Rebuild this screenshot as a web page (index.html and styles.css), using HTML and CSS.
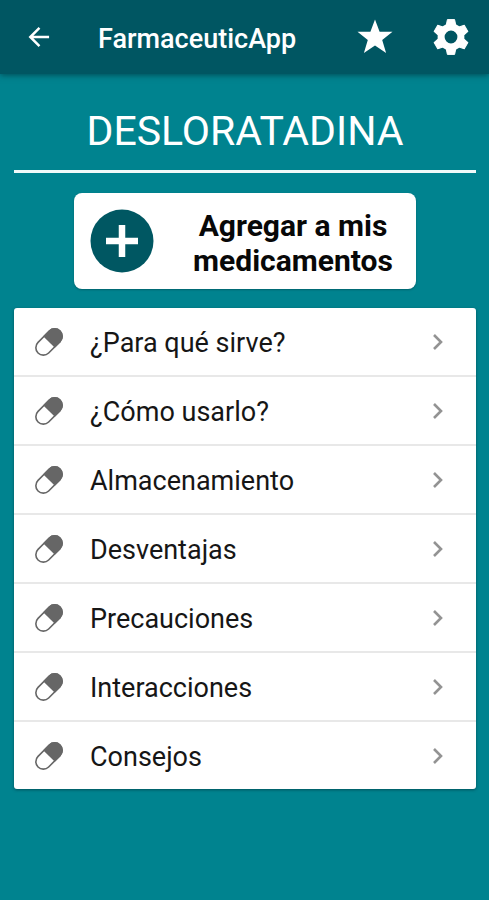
FILE: index.html
```html
<!DOCTYPE html>
<html lang="es">
<head>
<meta charset="utf-8">
<meta name="viewport" content="width=device-width, initial-scale=1">
<title>FarmaceuticApp</title>
<link rel="stylesheet" href="styles.css">
</head>
<body>
<svg class="sprite" aria-hidden="true">
  <symbol id="pill" viewBox="0 0 28 28">
    <g transform="rotate(-45 14 14)">
      <rect x="-1.5" y="6.500" width="31" height="15" rx="7.500" fill="#fff" stroke="#666" stroke-width="1.6"/>
      <path d="M14 5.700h8a8.300 8.300 0 0 1 0 16.600h-8z" fill="#666"/>
    </g>
  </symbol>
  <symbol id="chevron" viewBox="0 0 12 18">
    <path d="M2 2l7 7-7 7" fill="none" stroke="#939393" stroke-width="2.6"/>
  </symbol>
</svg>
<header class="bar">
  <button class="icon-button" type="button" aria-label="Volver">
    <svg class="icon-back" viewBox="0 0 24 24"><path d="M23 12H3M12.500 2L2.500 12l10 10" fill="none" stroke="#fff" stroke-width="2.700"/></svg>
  </button>
  <h1 class="bar-title">FarmaceuticApp</h1>
  <button class="icon-button" type="button" aria-label="Favoritos">
    <svg class="icon-star" viewBox="0 0 36 36"><path d="M18 .5l4.600 12.300h12.900l-10.300 8.300 3.900 12.900L18 26.400 6.900 34l3.900-12.900L.5 12.800h12.900z" fill="#fff"/></svg>
  </button>
  <button class="icon-button" type="button" aria-label="Ajustes">
    <svg class="icon-gear" viewBox="-18 -18 36 36">
      <circle r="9.900" fill="none" stroke="#fff" stroke-width="7"/>
      <g fill="#fff" stroke="#fff" stroke-width="1" stroke-linejoin="round">
        <path id="tooth" d="M-3.600-17.400h7.200L5-10.500H-5z"/>
        <use href="#tooth" transform="rotate(60)"/>
        <use href="#tooth" transform="rotate(120)"/>
        <use href="#tooth" transform="rotate(180)"/>
        <use href="#tooth" transform="rotate(240)"/>
        <use href="#tooth" transform="rotate(300)"/>
      </g>
    </svg>
  </button>
</header>
<main class="content">
  <h2 class="drug">DESLORATADINA</h2>
  <button class="add" type="button">
    <svg class="icon-add" viewBox="0 0 64 64"><circle cx="32" cy="32" r="31.500" fill="#005762"/><path d="M32 16v32M16 32h32" stroke="#fff" stroke-width="6.500"/></svg>
    <span class="add-label">Agregar a mis medicamentos</span>
  </button>
  <nav class="list">
    <a class="row" href="#uso"><svg class="pill"><use href="#pill"/></svg><span class="label">¿Para qué sirve?</span><svg class="chevron"><use href="#chevron"/></svg></a>
    <a class="row" href="#como"><svg class="pill"><use href="#pill"/></svg><span class="label">¿Cómo usarlo?</span><svg class="chevron"><use href="#chevron"/></svg></a>
    <a class="row" href="#almacenamiento"><svg class="pill"><use href="#pill"/></svg><span class="label">Almacenamiento</span><svg class="chevron"><use href="#chevron"/></svg></a>
    <a class="row" href="#desventajas"><svg class="pill"><use href="#pill"/></svg><span class="label">Desventajas</span><svg class="chevron"><use href="#chevron"/></svg></a>
    <a class="row" href="#precauciones"><svg class="pill"><use href="#pill"/></svg><span class="label">Precauciones</span><svg class="chevron"><use href="#chevron"/></svg></a>
    <a class="row" href="#interacciones"><svg class="pill"><use href="#pill"/></svg><span class="label">Interacciones</span><svg class="chevron"><use href="#chevron"/></svg></a>
    <a class="row" href="#consejos"><svg class="pill"><use href="#pill"/></svg><span class="label">Consejos</span><svg class="chevron"><use href="#chevron"/></svg></a>
  </nav>
</main>
</body>
</html>
```
FILE: styles.css
```css
* { box-sizing: border-box; }

body {
  margin: 0;
  min-height: 100vh;
  background: #00838f;
  font-family: Roboto, "Liberation Sans", sans-serif;
}

svg { display: block; flex: none; }

.sprite { position: absolute; width: 0; height: 0; }

.bar {
  display: flex;
  align-items: center;
  height: 74px;
  padding: 0 16px 0 24px;
  background: #005662;
  box-shadow: 0 1px 6px rgba(0, 50, 58, 0.7);
}

.icon-button {
  display: flex;
  align-items: center;
  justify-content: center;
  height: 48px;
  padding: 0 4px;
  border: 0;
  background: none;
}

.icon-back { width: 22px; height: 22px; }
.icon-star { width: 36px; height: 36px; }
.icon-gear { width: 36px; height: 36px; }

.bar-title {
  flex: 1;
  margin: 0 0 0 44px;
  padding-top: 3px;
  color: #fff;
  font-size: 27px;
  font-weight: 500;
  line-height: 32px;
}

.icon-star { margin-right: 32px; }

.content { padding: 32px 13px 24px 14px; }

.drug {
  margin: 0;
  padding-bottom: 14px;
  border-bottom: 3px solid #f0fafa;
  color: #fff;
  font-size: 41px;
  font-weight: 400;
  line-height: 50px;
  text-align: center;
}

.add {
  display: flex;
  align-items: center;
  width: 74%;
  min-height: 96px;
  margin: 20px auto 19px;
  padding: 0 16px;
  border: 0;
  border-radius: 8px;
  background: #fff;
  box-shadow: 0 1px 2px rgba(0, 50, 58, 0.4);
  color: #080808;
  font: 700 30px/35px Roboto, "Liberation Sans", sans-serif;
}

.icon-add { width: 64px; height: 64px; }

.add-label { flex: 1; padding: 4px 0 0 32px; }

.list {
  border-radius: 3px;
  background: #fff;
  box-shadow: 0 1px 3px rgba(0, 50, 58, 0.6);
}

.row {
  display: flex;
  align-items: center;
  height: 69px;
  padding: 0 32px 0 21px;
  border-bottom: 2px solid #e8e8e8;
  color: #161616;
  font-size: 27px;
  text-decoration: none;
}

.row:last-child { height: 67px; border-bottom: 0; }

.pill { width: 28px; height: 28px; }
.label { flex: 1; margin-left: 27px; padding-top: 2px; }
.chevron { width: 12px; height: 18px; }
```
